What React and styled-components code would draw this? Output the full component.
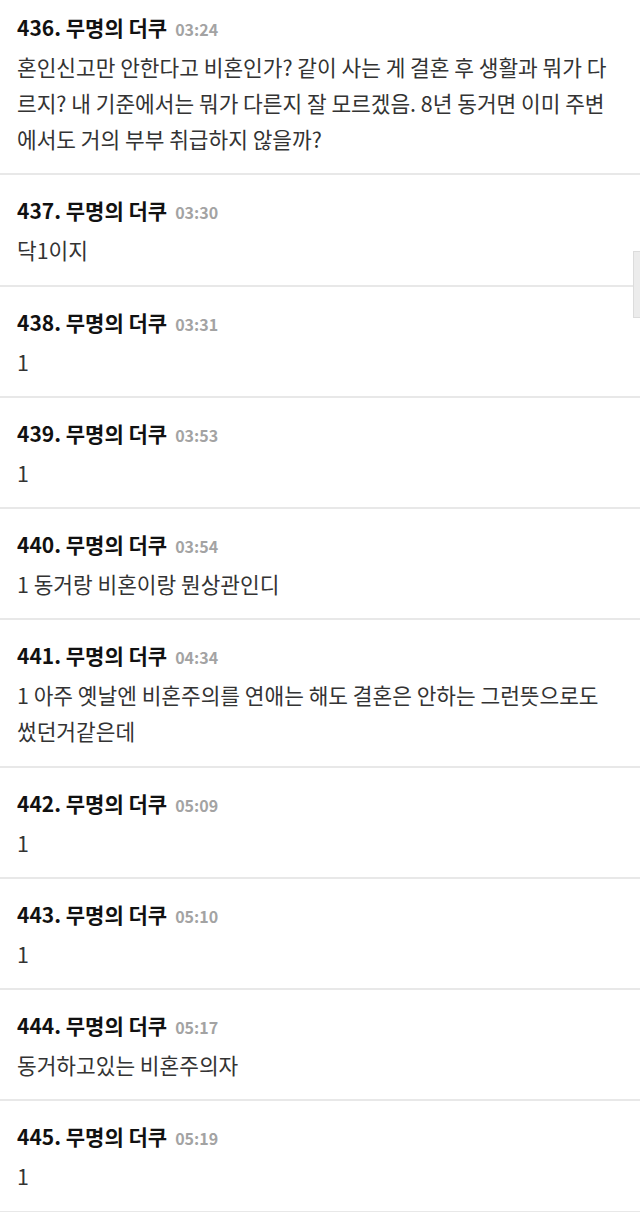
import React from 'react';
import styled, { createGlobalStyle } from 'styled-components';

const GlobalStyle = createGlobalStyle`
  html, body {
    margin: 0;
    padding: 0;
    background: #ffffff;
  }
  body {
    font-family: "Noto Sans CJK KR", "Noto Sans", sans-serif;
  }
`;

const comments = [
  {
    no: 436,
    time: '03:24',
    lines: [
      '혼인신고만 안한다고 비혼인가? 같이 사는 게 결혼 후 생활과 뭐가 다',
      '르지? 내 기준에서는 뭐가 다른지 잘 모르겠음. 8년 동거면 이미 주변',
      '에서도 거의 부부 취급하지 않을까?',
    ],
  },
  { no: 437, time: '03:30', lines: ['닥1이지'] },
  { no: 438, time: '03:31', lines: ['1'] },
  { no: 439, time: '03:53', lines: ['1'] },
  { no: 440, time: '03:54', lines: ['1 동거랑 비혼이랑 뭔상관인디'] },
  {
    no: 441,
    time: '04:34',
    lines: ['1 아주 옛날엔 비혼주의를 연애는 해도 결혼은 안하는 그런뜻으로도', '썼던거같은데'],
  },
  { no: 442, time: '05:09', lines: ['1'] },
  { no: 443, time: '05:10', lines: ['1'] },
  { no: 444, time: '05:17', lines: ['동거하고있는 비혼주의자'] },
  { no: 445, time: '05:19', lines: ['1'] },
];

const App = () => {
  return (
    <Page>
      <GlobalStyle />
      <CommentList>
        {comments.map((c, i) => (
          <Comment key={c.no} first={i === 0}>
            <Header>
              <Author>{c.no}. 무명의 더쿠</Author>
              <Time>{c.time}</Time>
            </Header>
            <Body>
              {c.lines.map((line, j) => (
                <Line key={j}>{line}</Line>
              ))}
            </Body>
          </Comment>
        ))}
      </CommentList>
      <ScrollThumb />
    </Page>
  );
};

const Page = styled.div`
  width: 640px;
  height: 1212px;
  overflow: hidden;
  position: relative;
  background: #fff;
`;

const CommentList = styled.ul`
  list-style: none;
  margin: 0;
  padding: 0;
`;

const Comment = styled.li`
  padding: ${(p) => (p.first ? '13px' : '21px')} 17px 16.25px;
  border-bottom: 2px solid #e8e8e8;
`;

const Header = styled.div`
  display: flex;
  align-items: baseline;
  height: 28px;
  line-height: 28px;
`;

const Author = styled.span`
  font-size: 21px;
  font-weight: 700;
  color: #111;
`;

const Time = styled.span`
  margin-left: 8px;
  font-size: 16px;
  font-weight: 700;
  color: #a3a3a3;
`;

const Body = styled.div`
  margin-top: 8px;
  font-size: 21.4px;
  line-height: 36px;
  color: #333;
`;

const Line = styled.div`
  white-space: nowrap;
`;

const ScrollThumb = styled.div`
  position: absolute;
  top: 251px;
  right: 0;
  width: 6px;
  height: 65px;
  background: #ececec;
  border: 1px solid #dcdcdc;
  border-right: none;
`;

export default App;
